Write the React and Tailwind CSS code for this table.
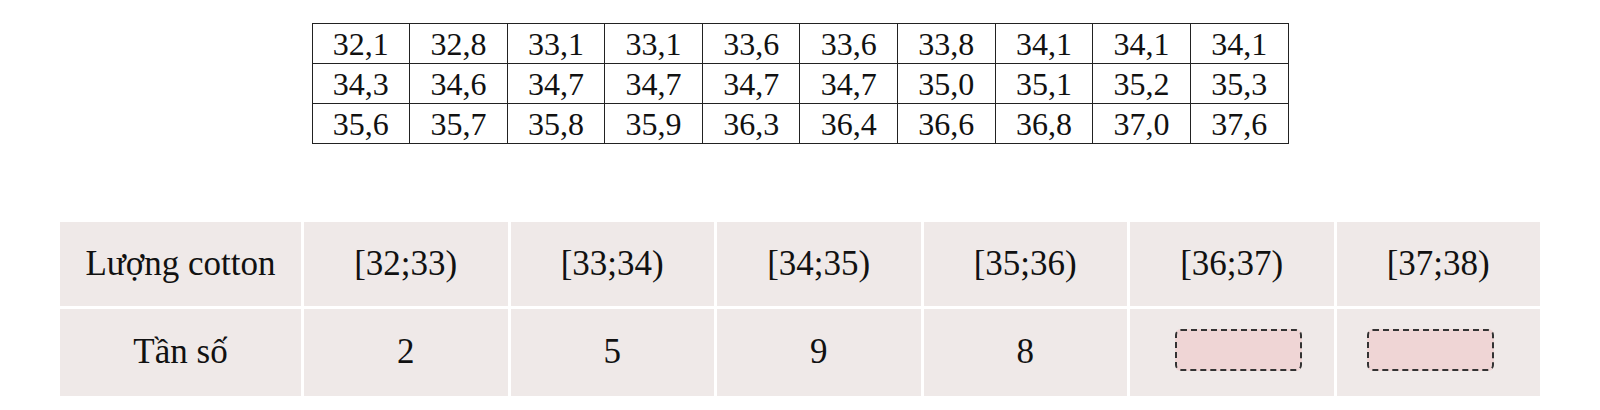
import React from "react";

const rows = [
  ["32,1", "32,8", "33,1", "33,1", "33,6", "33,6", "33,8", "34,1", "34,1", "34,1"],
  ["34,3", "34,6", "34,7", "34,7", "34,7", "34,7", "35,0", "35,1", "35,2", "35,3"],
  ["35,6", "35,7", "35,8", "35,9", "36,3", "36,4", "36,6", "36,8", "37,0", "37,6"],
];

const ranges = ["[32;33)", "[33;34)", "[34;35)", "[35;36)", "[36;37)", "[37;38)"];

export default function App() {
  return (
    <div className="w-[1600px] h-[410px] bg-white flex flex-col items-center" style={{ fontFamily: '"Liberation Serif", "Times New Roman", serif' }}>
      <table className="mt-[23px] w-[977px] border-collapse border-[1.5px] border-[#222] text-[32px] text-[#111] leading-none">
        <tbody>
          {rows.map((r, i) => (
            <tr key={i} className="h-[40px]">
              {r.map((v, j) => (
                <td key={j} className="border-[1.5px] border-[#222] text-center p-0 align-middle">
                  {v}
                </td>
              ))}
            </tr>
          ))}
        </tbody>
      </table>

      <div className="mt-[78px] w-[1480px] grid grid-cols-[241px_repeat(6,1fr)] grid-rows-[84px_87px] gap-[3px] bg-white text-[35px] text-[#111]">
        <div className="bg-[#efe9e8] flex items-center justify-center">Lượng cotton</div>
        {ranges.map((r) => (
          <div key={r} className="bg-[#efe9e8] flex items-center justify-center">{r}</div>
        ))}
        <div className="bg-[#efe9e8] flex items-center justify-center">Tần số</div>
        <div className="bg-[#efe9e8] flex items-center justify-center">2</div>
        <div className="bg-[#efe9e8] flex items-center justify-center">5</div>
        <div className="bg-[#efe9e8] flex items-center justify-center">9</div>
        <div className="bg-[#efe9e8] flex items-center justify-center">8</div>
        <div className="bg-[#efe9e8] flex items-center justify-center">
          <div className="ml-[14px] mb-[6px] w-[127px] h-[42px] rounded-[6px] border-2 border-dashed border-[#333] bg-[#efd5d5]"></div>
        </div>
        <div className="bg-[#efe9e8] flex items-center justify-center">
          <div className="mr-[16px] mb-[6px] w-[127px] h-[42px] rounded-[6px] border-2 border-dashed border-[#333] bg-[#efd5d5]"></div>
        </div>
      </div>
    </div>
  );
}
